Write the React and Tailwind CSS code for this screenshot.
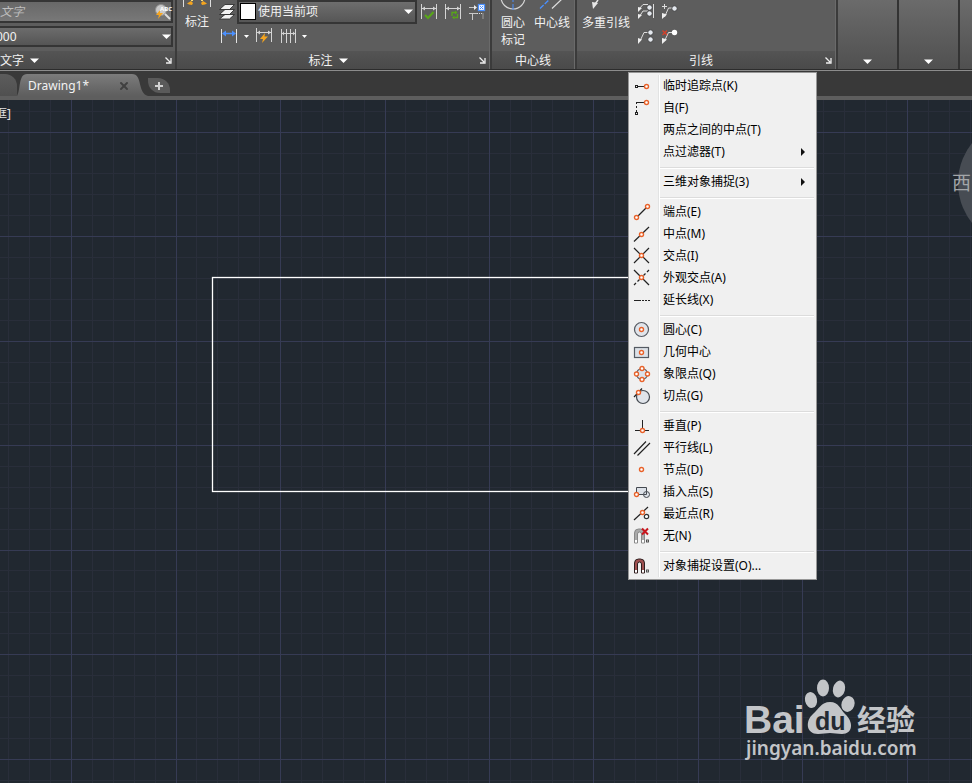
import { X } from 'lucide-react';

const GRID_STEP = 20.9;
const GRID_COUNT = 120;

// ---------- small shared pieces ----------

const Icon = ({ children }) => (
  <svg className="h-4 w-4 shrink-0 overflow-visible" viewBox="0 0 16 16" fill="none">
    {children}
  </svg>
);

const Caret = () => (
  <svg className="h-[5px] w-[9px] shrink-0" viewBox="0 0 9 5">
    <path d="M0 0.5h9L4.5 5z" fill="#fff" />
  </svg>
);

const SmallCaret = () => (
  <svg className="h-[3px] w-[5px] shrink-0" viewBox="0 0 5 3">
    <path d="M0 0h5L2.5 3z" fill="#fff" />
  </svg>
);

const Launcher = ({ label }) => (
  <button type="button" aria-label={label} className="absolute right-[3px] top-1.5 h-[7px] w-[7px]">
    <svg className="block h-[7px] w-[7px]" viewBox="0 0 7 7" fill="none" stroke="#f0f0f0">
      <path d="M0.5 0.5L5 5M6 1v5H1" strokeWidth="1.3" />
    </svg>
  </button>
);

const Ring = ({ x, y, r = 2 }) => (
  <circle cx={x} cy={y} r={r} fill="#fff" stroke="#e8622a" strokeWidth="1.4" />
);

const Knob = ({ x, y }) => <circle cx={x} cy={y} r="2.7" fill="#e4e8ee" stroke="#333" strokeWidth="0.8" />;

const Magnet = ({ color, edge }) => (
  <>
    <path d="M0.5 15V5a4 4 0 0 1 4-4h2a4 4 0 0 1 4 4v10h-3V6a2 2 0 0 0-4 0v9z" fill={color} stroke={edge} />
    <path d="M1 12h2v2.500H1zM8 12h2v2.500H8z" fill="#fff" />
    <rect x="12.5" y="12" width="2" height="2" stroke="#444" strokeWidth="0.9" />
  </>
);

// ---------- snap menu ----------

const snapGroups = [
  [
    {
      label: '临时追踪点(K)',
      icon: (
        <>
          <path d="M4 8.5h6.500" stroke="#222" />
          <rect x="1.500" y="7.500" width="2" height="2" stroke="#222" />
          <Ring x={12.5} y={8.5} />
        </>
      ),
    },
    {
      label: '自(F)',
      icon: (
        <>
          <path d="M3 2.500h7" stroke="#222" />
          <path d="M2.500 2v10" stroke="#222" strokeDasharray="2 2" />
          <rect x="1.500" y="12.500" width="2" height="2" stroke="#222" />
          <Ring x={12.5} y={2.5} />
        </>
      ),
    },
    { label: '两点之间的中点(T)' },
    { label: '点过滤器(T)', submenu: true },
  ],
  [{ label: '三维对象捕捉(3)', submenu: true }],
  [
    {
      label: '端点(E)',
      icon: (
        <>
          <path d="M3 13L13 3" stroke="#222" strokeWidth="1.2" />
          <Ring x={2.5} y={13.5} />
          <Ring x={13.5} y={2.5} />
        </>
      ),
    },
    {
      label: '中点(M)',
      icon: (
        <>
          <path d="M0 15.500L15 1" stroke="#222" strokeWidth="1.2" />
          <Ring x={7.5} y={8.5} />
        </>
      ),
    },
    {
      label: '交点(I)',
      icon: (
        <>
          <path d="M0 0l15 15M15 0L0 15" stroke="#222" strokeWidth="1.2" />
          <Ring x={7.5} y={7.5} />
        </>
      ),
    },
    {
      label: '外观交点(A)',
      icon: (
        <>
          <path d="M0 0l15 15" stroke="#222" strokeWidth="1.2" />
          <path d="M15 0l-2 2M11.500 3.500l-2 2M5.500 9.500l-2 2M2 13l-2 2" stroke="#222" strokeWidth="1.2" />
          <Ring x={7.5} y={7.5} />
        </>
      ),
    },
    {
      label: '延长线(X)',
      icon: (
        <>
          <path d="M0 8.500h7" stroke="#222" />
          <path d="M8 8.500h8" stroke="#222" strokeDasharray="2 1" />
        </>
      ),
    },
  ],
  [
    {
      label: '圆心(C)',
      icon: (
        <>
          <circle cx="7.500" cy="7.500" r="7" fill="#e0e4ea" stroke="#555a62" strokeWidth="1.2" />
          <Ring x={7.5} y={7.5} />
        </>
      ),
    },
    {
      label: '几何中心',
      icon: (
        <>
          <rect x="0.500" y="3.500" width="14" height="10" fill="#dce1e8" stroke="#555a62" strokeWidth="1.2" />
          <Ring x={7.5} y={8.5} />
        </>
      ),
    },
    {
      label: '象限点(Q)',
      icon: (
        <>
          <circle cx="8" cy="8" r="5.500" fill="#dce1e8" stroke="#555a62" strokeWidth="1.2" />
          <Ring x={8} y={2.5} />
          <Ring x={8} y={13.5} />
          <Ring x={2.5} y={8} />
          <Ring x={13.5} y={8} />
        </>
      ),
    },
    {
      label: '切点(G)',
      icon: (
        <>
          <circle cx="9" cy="9" r="6.500" fill="#e0e4ea" stroke="#444950" strokeWidth="1.2" />
          <path d="M0 9l8-8.500" stroke="#222" strokeWidth="1.2" />
          <Ring x={4.5} y={4.5} />
        </>
      ),
    },
  ],
  [
    {
      label: '垂直(P)',
      icon: (
        <>
          <path d="M1 12.500h14M8.500 2v10" stroke="#222" />
          <Ring x={8.5} y={12.5} />
        </>
      ),
    },
    { label: '平行线(L)', icon: <path d="M0 14L12 1.500M3.500 15.500L16 3" stroke="#222" strokeWidth="1.2" /> },
    { label: '节点(D)', icon: <Ring x={7.5} y={7.5} /> },
    {
      label: '插入点(S)',
      icon: (
        <>
          <path d="M2.500 10.500v-7h10v7z" fill="#dce1e8" stroke="#444950" />
          <circle cx="12.500" cy="10.500" r="3" fill="#dce1e8" stroke="#444950" />
          <path d="M12.500 7.500v3h-3" stroke="#444950" />
          <Ring x={2.5} y={10.5} />
        </>
      ),
    },
    {
      label: '最近点(R)',
      icon: (
        <>
          <path d="M0 14L14 1" stroke="#222" strokeWidth="1.2" />
          <circle cx="12.500" cy="10.500" r="2.200" fill="#fff" stroke="#333" strokeWidth="1.2" />
          <Ring x={8.5} y={6.5} />
        </>
      ),
    },
    {
      label: '无(N)',
      icon: (
        <>
          <Magnet color="#aaa" edge="#888" />
          <path d="M8 0.500l6 6M14 0.500l-6 6" stroke="#c8161d" strokeWidth="2" />
        </>
      ),
    },
  ],
  [{ label: '对象捕捉设置(O)...', icon: <Magnet color="#a05050" edge="#2e2020" /> }],
];

const SnapMenu = () => (
  <div
    role="menu"
    className="absolute left-[628px] top-[72px] z-10 w-[189px] border border-[#979797] bg-[#f0f0f0] py-0.5 text-xs text-black"
  >
    <div className="bg-[linear-gradient(to_right,transparent_29px,#e2e3e3_29px,#e2e3e3_30px,#fff_30px,#fff_31px,transparent_31px)]">
      {snapGroups.map((group, i) => (
        <div key={i}>
          {i > 0 && (
            <div role="separator" className="ml-[31px] mr-0.5 flex h-2 flex-col justify-end pb-0.5">
              <div className="h-px bg-[#dcdcdc]" />
              <div className="h-px bg-white" />
            </div>
          )}
          {group.map((item) => (
            <button
              key={item.label}
              type="button"
              role="menuitem"
              className="flex h-[22px] w-full items-center gap-[13px] pl-[5px] pr-[11px] text-left hover:bg-[#d8e6f5]"
            >
              <Icon>{item.icon}</Icon>
              <span className="flex-1 whitespace-nowrap">{item.label}</span>
              {item.submenu && (
                <svg className="h-2 w-1" viewBox="0 0 4 8">
                  <path d="M0 0l4 4L0 8z" fill="#111" />
                </svg>
              )}
            </button>
          ))}
        </div>
      ))}
    </div>
  </div>
);

// ---------- ribbon ----------

const Panel = ({ title, caret, launcher, className, children }) => (
  <section className={`flex flex-col border-r-2 border-[#3b3b3b] ${className}`}>
    <div className="h-[51px] overflow-hidden border-r border-[#6a6a6a]">{children}</div>
    <div
      className={`relative flex h-[18px] items-center justify-center gap-1.5 border-r border-[#6a6a6a] bg-linear-to-b from-[#545454] to-[#4a4a4a] pt-px ${launcher ? 'pr-2.5' : ''}`}
    >
      <span>{title}</span>
      {caret && <Caret />}
      {launcher && <Launcher label={`${title}设置`} />}
    </div>
  </section>
);

const CollapsedPanel = ({ label }) => (
  <button
    type="button"
    aria-label={label}
    className="flex h-[69px] w-[61px] shrink-0 items-end justify-center border-r-2 border-[#333] bg-linear-to-b from-[#6b6b6b] to-[#505050] pb-[5px]"
  >
    <Caret />
  </button>
);

const ToolButton = ({ label, children }) => (
  <button type="button" aria-label={label} className="h-4 w-4">
    <Icon>{children}</Icon>
  </button>
);

const TextPanel = () => (
  <section className="flex w-[177px] shrink-0 flex-col border-r-2 border-[#3b3b3b]">
    <div className="flex h-[51px] flex-col gap-[3px] overflow-hidden pr-0.5">
      <div className="flex h-[23px] items-center border-y-2 border-r-2 border-[#353535] bg-linear-to-b from-[#686868] to-[#787878]">
        <input
          type="text"
          aria-label="查找文字"
          placeholder="文字"
          className="min-w-0 flex-1 bg-transparent italic outline-none placeholder:text-[#bdbdbd]"
        />
        <ToolButton label="查找">
          <circle cx="6" cy="6" r="5.500" fill="#c9c9c9" stroke="#909090" />
          <path d="M10 10l5 5" stroke="#ddd" strokeWidth="2" />
          <path d="M5 6L1 11h3l-1 4 5-6H5z" fill="#f5a51f" />
          <text x="5" y="7" fontSize="6" fontWeight="bold" fill="#fff">ABC</text>
        </ToolButton>
      </div>
      <div className="relative h-[21px]">
        <select
          aria-label="文字高度"
          className="-ml-1.5 h-full w-[179px] appearance-none border-2 border-[#353535] bg-linear-to-b from-[#6c6c6c] to-[#555] outline-none"
        >
          <option>000</option>
        </select>
        <span className="pointer-events-none absolute right-0.5 top-2">
          <Caret />
        </span>
      </div>
    </div>
    <div className="relative flex h-[18px] items-center gap-1.5 bg-linear-to-b from-[#545454] to-[#4a4a4a] pt-px">
      <span>文字</span>
      <Caret />
      <Launcher label="文字设置" />
    </div>
  </section>
);

const DimensionPanel = () => (
  <Panel title="标注" caret launcher className="w-[315px] shrink-0">
    <div className="flex gap-2 pl-1.5">
      <button type="button" className="flex flex-col items-center gap-0.5 self-start">
        <svg className="h-3 w-7" viewBox="0 0 28 12" fill="none">
          <path d="M0.500 0v7M27.500 0v7" stroke="#ddd" />
          <path d="M4 3.500l4-2.500 2 2-1 2-3-0.500zM24 3.500l-4-2.500-2 2 1 2 3-0.500z" fill="#f5a51f" />
          <path d="M8 0.500h2M18 0.500h2" stroke="#f8dc75" />
        </svg>
        <span>标注</span>
      </button>
      <div className="flex flex-col gap-1">
        <div className="flex h-6 items-center gap-1">
          <div className="flex items-center gap-0.5">
            <ToolButton label="图层">
              <path
                d="M6 10.500h9.500l-5 4.500H0.500zM6 5.500h9.500l-5 5H0.500zM6 0.500h9.500l-5 5H0.500z"
                fill="#f2f2f2"
                stroke="#303030"
                strokeWidth="0.9"
              />
            </ToolButton>
            <div className="relative h-6 w-[180px]">
              <select
                aria-label="标注图层"
                className="h-full w-full appearance-none border-2 border-[#353535] bg-linear-to-b from-[#6e6e6e] to-[#565656] pl-[19px] outline-none"
              >
                <option>使用当前项</option>
              </select>
              <span className="pointer-events-none absolute left-[3px] top-[3px] h-[17px] w-4 border border-black bg-white" />
              <span className="pointer-events-none absolute right-1 top-[9px]">
                <Caret />
              </span>
            </div>
          </div>
          <div className="flex gap-2">
            <ToolButton label="检验标注">
              <path d="M0.500 0v15M15.500 0v15M1 4.500h14" stroke="#d4d4d4" />
              <path d="M1 4.500l3-2v4zM15 4.500l-3-2v4z" fill="#d4d4d4" />
              <path d="M4 11l3 3 5.500-6" stroke="#58a618" strokeWidth="2.200" />
            </ToolButton>
            <ToolButton label="更新标注">
              <path d="M0.500 0v15M15.500 0v15M1 4.500h14" stroke="#d4d4d4" />
              <path d="M1 4.500l3-2v4zM15 4.500l-3-2v4z" fill="#d4d4d4" />
              <path d="M7 12V8.500h3M12.500 10v3.500h-3" stroke="#58a618" strokeWidth="1.300" />
              <path d="M10 6.500l2.500 2-2.500 2zM9.500 11.500l-2.500 2 2.500 2z" fill="#58a618" />
            </ToolButton>
            <ToolButton label="折弯标注">
              <rect x="9.500" y="0.500" width="6" height="6" fill="#fff" stroke="#4a90ff" strokeWidth="1.300" />
              <path d="M11 2l3 3M14 2l-3 3" stroke="#4a90ff" />
              <path d="M0 3.500h6M0 9.500h8M3.500 9v7" stroke="#c8c8c8" />
              <path d="M5 1l3 2.500L5 6z" fill="#eee" />
              <path d="M8 9.500h6v6" stroke="#ddd" strokeDasharray="1 1" />
            </ToolButton>
          </div>
        </div>
        <div className="flex items-center gap-[7px] pl-0.5">
          <ToolButton label="线性">
            <path d="M0.500 1v14M15.500 1v14" stroke="#e4e4e4" />
            <path d="M3 5.500h10" stroke="#4a90ff" strokeWidth="1.500" />
            <path d="M1 5.500l4-3v6zM15 5.500l-4-3v6z" fill="#4a90ff" />
          </ToolButton>
          <SmallCaret />
          <ToolButton label="快速标注">
            <path d="M0.500 0v14M15.500 0v14M1 4.500h14" stroke="#d4d4d4" />
            <path d="M1 4.500l3-2v4zM15 4.500l-3-2v4z" fill="#d4d4d4" />
            <path d="M9 5L4 11h3l-1 4 6-6.500H8.500z" fill="#f5a51f" />
          </ToolButton>
          <ToolButton label="连续">
            <path d="M2.500 1v14M7.500 1v14M11.500 1v14M16.500 1v14M3 5.500h13" stroke="#d4d4d4" />
            <path d="M3 5.500l2-2v4zM16 5.500l-2-2v4z" fill="#d4d4d4" />
          </ToolButton>
          <SmallCaret />
        </div>
      </div>
    </div>
  </Panel>
);

const CenterlinePanel = () => (
  <Panel title="中心线" className="w-[85px] shrink-0">
    <div className="flex items-start gap-2 pl-2">
      <button type="button" className="flex flex-col items-center gap-0.5">
        <svg className="h-3 w-[26px]" viewBox="0 0 26 12" fill="none">
          <path d="M1 -3a12 12 0 0 0 24 0" stroke="#d5d5d5" strokeWidth="1.200" />
          <path d="M13 0v2M13 4v6" stroke="#4a90ff" />
        </svg>
        <span className="w-6 leading-[17px]">圆心标记</span>
      </button>
      <button type="button" className="flex flex-col items-center gap-0.5">
        <svg className="h-3 w-[26px]" viewBox="0 0 26 12" fill="none">
          <path d="M1 8.500L11 -1" stroke="#4a90ff" strokeWidth="1.300" strokeDasharray="5 1.500" />
          <path d="M13 8.500L23 -1" stroke="#ddd" strokeWidth="1.200" />
        </svg>
        <span className="whitespace-nowrap leading-[17px]">中心线</span>
      </button>
    </div>
  </Panel>
);

const LeaderPanel = () => (
  <Panel title="引线" launcher className="min-w-0 flex-1">
    <div className="flex gap-2 pl-[5px]">
      <button type="button" className="flex flex-col items-center gap-0.5 self-start">
        <svg className="h-3 w-12" viewBox="0 0 48 12" fill="none">
          <path d="M16 0l-3 4" stroke="#e8e8e8" strokeWidth="1.500" />
          <path d="M10 2l6 1-5 6z" fill="#e8e8e8" />
        </svg>
        <span className="whitespace-nowrap leading-[17px]">多重引线</span>
      </button>
      <div className="grid grid-cols-[16px_16px] gap-x-2 gap-y-[9px] pt-1">
        <ToolButton label="对齐引线">
          <path d="M1 5l4-4.500h5M1 13l4-6h5M15.500 0v14" stroke="#ddd" />
          <path d="M0 3l4 1-4 4zM0 10l4 1-4 4z" fill="#eee" />
          <Knob x={11.5} y={3.5} />
          <Knob x={11.5} y={9.5} />
        </ToolButton>
        <ToolButton label="添加引线">
          <path d="M2.500 13l4-9h4M0 2.500h5M2.500 0v5" stroke="#ddd" />
          <path d="M0 9l5 1.500L0 15z" fill="#eee" />
          <Knob x={12.5} y={4.5} />
        </ToolButton>
        <ToolButton label="合并引线">
          <path d="M2 12l4-8.500h4" stroke="#ddd" />
          <path d="M0 9l4 1.500L0 15z" fill="#eee" />
          <Knob x={12.5} y={3.5} />
          <Knob x={12.5} y={10.5} />
        </ToolButton>
        <ToolButton label="删除引线">
          <path d="M2.500 12l4-8.500h5" stroke="#ddd" />
          <path d="M0 9l5 1.500L0 15z" fill="#eee" />
          <path d="M0.500 1.500l4.500 4.500M5 1.500L0.500 6" stroke="#d8402a" strokeWidth="1.300" />
          <circle cx="12.500" cy="3.500" r="2.700" fill="#fff" />
        </ToolButton>
      </div>
    </div>
  </Panel>
);

const Ribbon = () => (
  <header className="flex overflow-hidden border-b border-[#2c2c2c] bg-[#5d5d5d] text-xs leading-4 text-[#f2f2f2]">
    <TextPanel />
    <DimensionPanel />
    <CenterlinePanel />
    <LeaderPanel />
    <CollapsedPanel label="表格" />
    <CollapsedPanel label="标记" />
    <div className="w-3 shrink-0 bg-linear-to-b from-[#6b6b6b] to-[#505050]" />
  </header>
);

// ---------- file tabs ----------

const FileTabs = () => (
  <nav className="flex h-[30px] items-end border-b-4 border-t border-b-[#5e5e5e] border-t-[#8c8c8c] bg-[#393939]">
    <div className="h-[22px] w-[17px] rounded-tr-xl bg-linear-to-b from-[#5c5c5c] to-[#505050]" />
    <div className="flex h-[22px] items-center">
      <svg className="h-[22px] w-[11px]" viewBox="0 0 11 22">
        <defs>
          <linearGradient id="tabFill" x1="0" y1="0" x2="0" y2="22" gradientUnits="userSpaceOnUse">
            <stop offset="0" stopColor="#7c7c7c" />
            <stop offset="1" stopColor="#5e5e5e" />
          </linearGradient>
        </defs>
        <path d="M0 22C4 16 1 0 10 0h1v22z" fill="url(#tabFill)" />
      </svg>
      <div className="flex h-full items-center gap-[29px] bg-linear-to-b from-[#7c7c7c] to-[#5e5e5e] pt-0.5 text-xs text-[#f2f2f2]">
        <button type="button">Drawing1*</button>
        <button type="button" aria-label="关闭">
          <X className="h-3 w-3 text-[#404040]" strokeWidth={4} />
        </button>
      </div>
      <svg className="h-[22px] w-[18px]" viewBox="0 0 18 22">
        <path d="M0 0h2C13 0 7 19 18 22H0z" fill="url(#tabFill)" />
      </svg>
    </div>
    <button
      type="button"
      aria-label="新图形"
      className="mb-[3px] flex h-[15px] w-[22px] items-center justify-center rounded-bl-xl rounded-tr-xl bg-[#5a5a5a]"
    >
      <svg className="h-2 w-2" viewBox="0 0 8 8">
        <path d="M4 0v8M0 4h8" stroke="#d2d2d2" strokeWidth="2" />
      </svg>
    </button>
  </nav>
);

// ---------- drawing area ----------

const Grid = () => {
  const lines = Array.from({ length: GRID_COUNT }, (_, i) => ({
    x: Math.floor(8.8 + i * GRID_STEP) + 0.5,
    y: Math.floor(11.2 + i * GRID_STEP) + 0.5,
    majorX: i % 5 === 3,
    majorY: i % 5 === 1,
  }));
  const minor = '#292e3a';
  const major = '#363b54';

  return (
    <g>
      {lines.map((l) => (
        <g key={l.x}>
          <line x1={l.x} y1="0" x2={l.x} y2="100%" stroke={minor} />
          <line x1="0" y1={l.y} x2="100%" y2={l.y} stroke={minor} />
        </g>
      ))}
      {lines.filter((l) => l.majorX).map((l) => (
        <line key={l.x} x1={l.x} y1="0" x2={l.x} y2="100%" stroke={major} />
      ))}
      {lines.filter((l) => l.majorY).map((l) => (
        <line key={l.y} x1="0" y1={l.y} x2="100%" y2={l.y} stroke={major} />
      ))}
    </g>
  );
};

const Watermark = () => (
  <svg className="absolute left-[742px] top-[576px] h-[90px] w-[180px]" viewBox="0 0 180 90" fill="#c3c5c8">
    <text x="2" y="57" fontSize="39" fontWeight="bold" fontFamily="Liberation Sans, sans-serif">Bai</text>
    <ellipse cx="69" cy="24" rx="6" ry="8" transform="rotate(-12 69 24)" />
    <ellipse cx="81" cy="12" rx="6" ry="8.500" />
    <ellipse cx="97" cy="13" rx="6" ry="8.500" transform="rotate(14 97 13)" />
    <ellipse cx="106" cy="28" rx="6.500" ry="8" transform="rotate(18 106 28)" />
    <path d="M88 26c9 0 10 7 15 12 9 8 8 20-3 20-5 0-8-1-12-1s-7 1-12 1c-12 0-13-13-5-20 6-5 8-12 17-12z" />
    <text x="73" y="54" fontSize="25" fontWeight="bold" fontFamily="Liberation Sans, sans-serif" fill="#232932">du</text>
    <text x="115" y="55" fontSize="29" fontWeight="bold" fontFamily="Noto Sans CJK SC, sans-serif">经验</text>
    <text x="4" y="79" fontSize="19" fontWeight="600" fontFamily="Noto Sans, sans-serif">jingyan.baidu.com</text>
  </svg>
);

const DrawingArea = () => (
  <main className="relative flex-1 overflow-hidden bg-[#212830]">
    <svg className="absolute inset-0 h-full w-full">
      <Grid />
      <rect x="212.500" y="177.500" width="520" height="214" fill="none" stroke="#fff" strokeWidth="1.300" />
      <circle cx="1022" cy="83" r="64" fill="#474c53" />
      <text x="952" y="90" fontSize="19" fill="#a3a6a9">西</text>
    </svg>
    <div className="relative -ml-[5px] pt-1.5 text-xs leading-4 text-[#e2e2e2]">框]</div>
    <Watermark />
  </main>
);

const App = () => (
  <div className="relative flex min-h-screen flex-col overflow-hidden bg-[#393939] font-['Noto_Sans','Noto_Sans_CJK_SC',sans-serif]">
    <Ribbon />
    <FileTabs />
    <DrawingArea />
    <SnapMenu />
  </div>
);

export default App;
